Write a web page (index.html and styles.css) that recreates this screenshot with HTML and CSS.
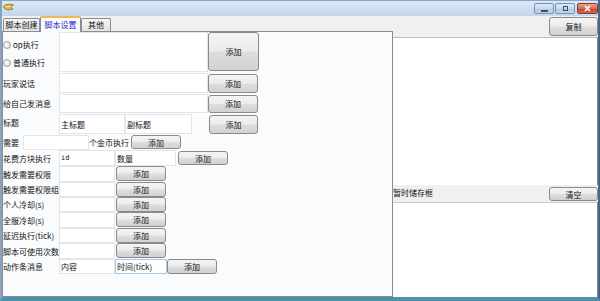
FILE: index.html
```html
<!DOCTYPE html>
<html>
<head>
<meta charset="utf-8">
<link rel="stylesheet" href="styles.css">
</head>
<body>
<div class="window">
  <div class="titlebar">
    <svg class="appicon" width="11" height="8" viewBox="0 0 11 8">
      <path d="M0.5 4 C2 1,6 0.5,10.5 2 C8 3,7 4,10 6 C6 7.5,2 7,0.5 4 Z" fill="#e2b53a" stroke="#8a6a1c" stroke-width="0.8"/>
      <path d="M2 4 L8 3.5" stroke="#fff3c4" stroke-width="0.8"/>
    </svg>
    <div class="caps">
      <span class="cap min"><i class="dash"></i></span>
      <span class="cap max"><i class="box"></i></span>
      <span class="cap close">
        <svg width="9" height="7" viewBox="0 0 9 7"><path d="M2 1 L7 6 M7 1 L2 6" stroke="#fff" stroke-width="1.6"/></svg>
      </span>
    </div>
  </div>
  <div class="client">
    <div class="tabctl">
      <div class="tabhead">
        <div class="tab t1">脚本创建</div>
        <div class="tab t2 sel">脚本设置</div>
        <div class="tab t3">其他</div>
      </div>
      <div class="tabpage">
        <div class="row r1">
          <div class="radios">
            <label class="radio"><span class="dot"></span>op执行</label>
            <label class="radio"><span class="dot"></span>普通执行</label>
          </div>
          <div class="tb w149"></div>
          <div class="btn b51 hbig">添加</div>
        </div>
        <div class="row r2">
          <div class="lbl">玩家说话</div>
          <div class="tb w149"></div>
          <div class="btn b50 h19">添加</div>
        </div>
        <div class="row r3">
          <div class="lbl">给自己发消息</div>
          <div class="tb w149"></div>
          <div class="btn b50 h18">添加</div>
        </div>
        <div class="row r4">
          <div class="lbl top">标题</div>
          <div class="tb w66">主标题</div>
          <div class="tb w67">副标题</div>
          <div class="btn b49 h19 gap17 mt1">添加</div>
        </div>
        <div class="row r5">
          <div class="lbl short">需要</div>
          <div class="tb w66"></div>
          <div class="txt">个金币执行</div>
          <div class="btn b50 h14">添加</div>
        </div>
        <div class="row r6">
          <div class="lbl">花费方块执行</div>
          <div class="tb w56 mono">id</div>
          <div class="tb w61">数量</div>
          <div class="btn b50 h14 gap2 mt1">添加</div>
        </div>
        <div class="row r7">
          <div class="lbl">触发需要权限</div>
          <div class="tb w56"></div>
          <div class="btn b50 h15 gap1">添加</div>
        </div>
        <div class="row r8">
          <div class="lbl">触发需要权限组</div>
          <div class="tb w56"></div>
          <div class="btn b50 h15 gap1">添加</div>
        </div>
        <div class="row r9">
          <div class="lbl">个人冷却(s)</div>
          <div class="tb w56"></div>
          <div class="btn b50 h15 gap1">添加</div>
        </div>
        <div class="row r10">
          <div class="lbl">全服冷却(s)</div>
          <div class="tb w56"></div>
          <div class="btn b50 h15 gap1">添加</div>
        </div>
        <div class="row r11">
          <div class="lbl">延迟执行(tick)</div>
          <div class="tb w56"></div>
          <div class="btn b50 h15 gap1">添加</div>
        </div>
        <div class="row r12">
          <div class="lbl">脚本可使用次数</div>
          <div class="tb w56"></div>
          <div class="btn b50 h15 gap1">添加</div>
        </div>
        <div class="row r13">
          <div class="lbl">动作条消息</div>
          <div class="tb w56">内容</div>
          <div class="tb w52 focus">时间(tick)</div>
          <div class="btn b50 h15">添加</div>
        </div>
      </div>
    </div>
    <div class="side">
      <div class="strip top"><div class="btn b49 h19">复制</div></div>
      <div class="memo m1"></div>
      <div class="strip mid"><span class="cap-lbl">暂时储存框</span><div class="btn b49 h14">清空</div></div>
      <div class="memo m2"></div>
    </div>
  </div>
</div>
</body>
</html>
```

FILE: styles.css
```css
* { box-sizing: border-box; }
html, body { margin: 0; padding: 0; }
body {
  width: 600px;
  height: 301px;
  overflow: hidden;
  font-family: "Noto Sans CJK SC", "Noto Sans", sans-serif;
  font-size: 8px;
  color: #111;
  background: #f0f0f0;
}
.window {
  width: 600px;
  height: 301px;
  display: flex;
  flex-direction: column;
  border-left: 2px solid #8aa2bf;
  border-right: 2px solid #4a6685;
  border-bottom: 4px solid #4f8fae;
  background: #f0f0f0;
}
.titlebar {
  height: 16px;
  flex: none;
  display: flex;
  justify-content: space-between;
  align-items: flex-start;
  border-top: 1px solid #8ea6c2;
  background: linear-gradient(#dbe7f5, #c3d6ee);
}
.appicon { margin: 2px 0 0 1px; }
.caps { display: flex; margin-top: 2px; }
.cap {
  height: 11px;
  border: 1px solid #7791b4;
  border-radius: 2px;
  display: flex;
  align-items: center;
  justify-content: center;
  background: linear-gradient(#dde8f5 0%, #c7d7ec 50%, #b3c8e3 51%, #c4d6ec 100%);
}
.cap.min { width: 20px; }
.cap.max { width: 20px; margin-left: 1px; }
.cap.close {
  width: 21px;
  margin-left: 2px;
  border-color: #8b3a30;
  background: linear-gradient(#e8a293 0%, #d66a58 50%, #c3432f 51%, #d5664f 100%);
}
.dash { display: block; width: 7px; height: 2px; background: #3b4d66; margin-top: 4px; }
.box { display: block; width: 5px; height: 5px; border: 1px solid #3b4d66; }

.client { flex: 1; display: flex; min-height: 0; }

.tabctl { width: 391px; flex: none; display: flex; flex-direction: column; }
.tabhead {
  height: 15px;
  flex: none;
  display: flex;
  align-items: flex-end;
  padding-left: 1px;
  position: relative;
  z-index: 2;
}
.tab {
  height: 13px;
  border: 1px solid #898c95;
  border-bottom: none;
  border-radius: 2px 2px 0 0;
  background: linear-gradient(#f6f6f6, #e4e4e4);
  line-height: 11px;
  text-align: center;
  white-space: nowrap;
}
.tab.t1 { width: 37px; }
.tab.t2 { width: 41px; }
.tab.t3 { width: 30px; }
.tab.sel {
  height: 16px;
  margin-bottom: -1px;
  background: #fbfbfc;
  color: #2b2bd0;
  border-top: 2px solid #f0b85a;
  line-height: 13px;
}
.tabpage {
  flex: 1;
  border: 1px solid #898c95;
  background: #fafbfd;
  display: flex;
  flex-direction: column;
}

.row { display: flex; align-items: center; flex: none; }
.r1 { height: 40px; align-items: flex-start; }
.r2 { height: 20px; margin-top: 1px; }
.r3 { height: 19px; margin-top: 1px; }
.r4 { height: 20px; margin-top: 1px; align-items: flex-start; }
.r5 { height: 15px; margin-top: 1px; align-items: flex-start; }
.r6, .r7, .r10, .r12 { height: 16px; align-items: flex-start; }
.r8, .r9, .r11, .r13 { height: 15px; align-items: flex-start; }

.lbl { width: 56px; flex: none; white-space: nowrap; align-self: center; }
.lbl.top { align-self: flex-start; padding-top: 3px; }
.lbl.short { width: 20px; }
.txt { width: 42px; flex: none; white-space: nowrap; align-self: center; }
.mono { font-family: "DejaVu Sans Mono", "Liberation Mono", monospace; font-size: 7px; }

.radios { width: 56px; flex: none; display: flex; flex-direction: column; gap: 9px; padding-top: 8px; }
.radio { display: flex; align-items: center; height: 9px; white-space: nowrap; }
.dot {
  width: 8px;
  height: 8px;
  border-radius: 50%;
  border: 1px solid #a0a0a0;
  background: radial-gradient(circle at 40% 40%, #ffffff, #d9d9d9);
  margin-right: 2px;
}

.tb {
  flex: none;
  height: 100%;
  background: #fff;
  border: 1px solid #e3e5ea;
  display: flex;
  align-items: center;
  padding-left: 1px;
  white-space: nowrap;
}
.tb.focus { border-color: #a7c7e8; }
.w149 { width: 149px; }
.w66 { width: 66px; }
.w67 { width: 67px; }
.w56 { width: 56px; }
.w61 { width: 61px; }
.w52 { width: 52px; }

.btn {
  flex: none;
  border: 1px solid #8a8a8a;
  border-radius: 3px;
  background: linear-gradient(#f4f4f4 0%, #ececec 48%, #dedede 52%, #d1d1d1 100%);
  display: flex;
  align-items: center;
  justify-content: center;
  white-space: nowrap;
}
.b51 { width: 51px; }
.b50 { width: 50px; }
.b49 { width: 49px; }
.hbig { height: 39px; }
.h19 { height: 19px; }
.h18 { height: 18px; }
.h15 { height: 15px; }
.h14 { height: 14px; }
.gap17 { margin-left: 17px; }
.gap2 { margin-left: 2px; }
.gap1 { margin-left: 1px; }
.mt1 { margin-top: 1px; }

.side { flex: 1; display: flex; flex-direction: column; }
.strip { flex: none; display: flex; background: #f0f0f0; }
.strip.top { height: 21px; justify-content: flex-end; padding-top: 1px; }
.strip.mid { height: 17px; justify-content: space-between; align-items: flex-start; padding-top: 2px; }
.cap-lbl { line-height: 10px; padding-top: 1px; }
.memo { background: #fff; border-right: 1px solid #7e8794; }
.memo.m1 { height: 148px; border-top: 1px solid #b9bcc2; }
.memo.m2 { flex: 1; border-top: 1px solid #c9cbd0; }
```
